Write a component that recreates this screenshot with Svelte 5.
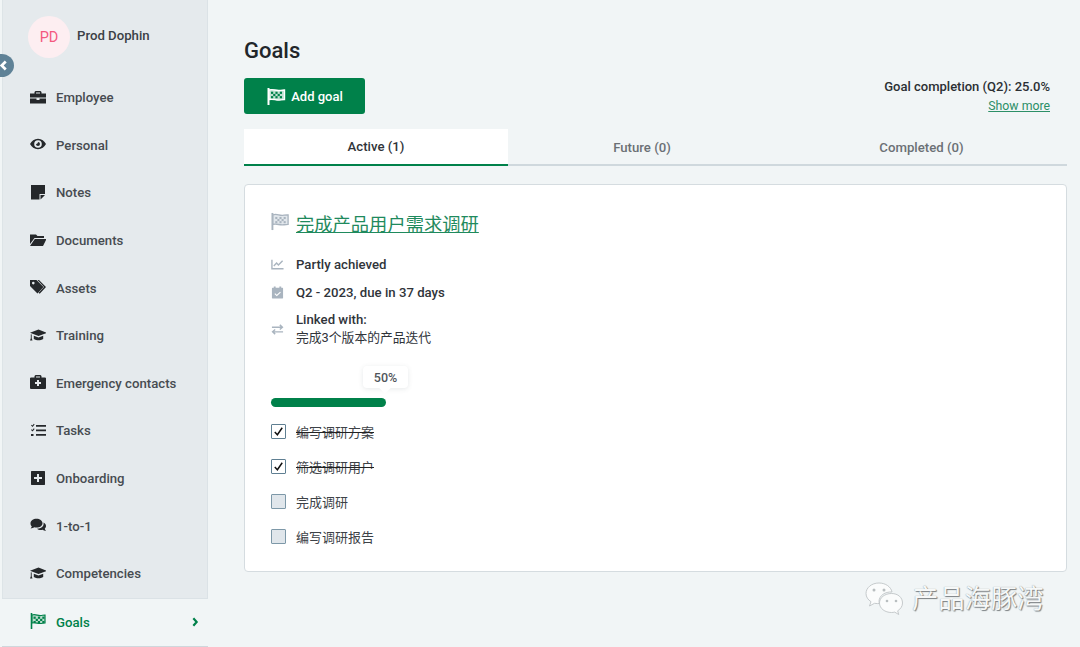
<script>
  const nav = [
    { label: "Employee", icon: "brief" },
    { label: "Personal", icon: "eye" },
    { label: "Notes", icon: "note" },
    { label: "Documents", icon: "folder" },
    { label: "Assets", icon: "tags" },
    { label: "Training", icon: "grad" },
    { label: "Emergency contacts", icon: "aid" },
    { label: "Tasks", icon: "tasks" },
    { label: "Onboarding", icon: "plus" },
    { label: "1-to-1", icon: "chat" },
    { label: "Competencies", icon: "grad" }
  ];
  const todos = [
    { text: "编写调研方案", done: true },
    { text: "筛选调研用户", done: true },
    { text: "完成调研", done: false },
    { text: "编写调研报告", done: false }
  ];
</script>

{#snippet checker(x, y, c)}
  <g fill={c}>
    {#each [0, 1, 2] as row}
      {#each [0, 1, 2, 3, 4] as col}
        {#if (row + col) % 2 === 0}
          <rect x={x + col * 2.2} y={y + row * 2.2} width="2.2" height="2.2" />
        {/if}
      {/each}
    {/each}
  </g>
{/snippet}

{#snippet navIcon(name)}
  <svg class="nav-icon" viewBox="0 0 16 16" aria-hidden="true">
    {#if name === "brief"}
      <path d="M5.500 2h5l1 1v1.500H16v4H0v-4h4.500V3zM6 3.500v1h4v-1zM0 9.500h6.500V11h3V9.500H16V14.500H0z" fill-rule="evenodd" />
    {:else if name === "eye"}
      <path fill-rule="evenodd" d="M8 2.800c3.600 0 6.500 2.300 8 5.200-1.500 2.900-4.400 5.200-8 5.200S1.500 10.900 0 8C1.500 5.100 4.400 2.800 8 2.800zm0 1.400A3.800 3.800 0 1 0 8 11.800 3.800 3.800 0 0 0 8 4.200zM8 6a2 2 0 1 1-2 2c.8.3 1.900-.9 2-2z" />
    {:else if name === "note"}
      <path d="M1 1h14v9h-5.500v5.500H1zM10.500 11H15l-4.500 4.500z" />
    {:else if name === "folder"}
      <path d="M0 2.500h6l1.500 1.500H14v2H4.500L0 12zM4.800 7H16.500l-3.500 7H0z" />
    {:else if name === "tags"}
      <path fill-rule="evenodd" d="M0 1h6.500l7 7-6 6.500L0 7zM3.300 2.800a1.300 1.300 0 1 0 0 2.600 1.300 1.300 0 0 0 0-2.600z" /><path d="M9 1l7 7-6.300 6.800-1.100-1L14 8 7.500 1z" />
    {:else if name === "grad"}
      <path d="M8.500 2.500L17 5.800 8.500 9 0 5.800zM3.800 8.800l4.700 1.800 4.700-1.800V12c-2.700 1.800-6.700 1.800-9.400 0zM.8 7.200v4l-.8 2.300h2.500l-.8-2.300V7.600z" />
    {:else if name === "aid"}
      <path fill-rule="evenodd" d="M5.500 1h5l1 1v1.500H15.300l.7.700V14.300l-.7.700H.7L0 14.300V4.200l.7-.7h3.800V2zM6 2.500v1h4v-1zM7 6V8H5v2h2v2h2v-2h2V8H9V6z" />
    {:else if name === "tasks"}
      <path d="M6 3h10v1.700H6zM6 7.500h10v1.700H6zM6 12h10v1.700H6zM1 12h2.500v2H1zM1 3.500l.8-.8.7.7 1.300-1.600.8.6-2 2.600zM1 8l.8-.8.7.7 1.300-1.600.8.6-2 2.600z" />
    {:else if name === "plus"}
      <path fill-rule="evenodd" d="M1.500 1H14.500l.5.500V14.500l-.5.500H1.500l-.5-.5V1.500zM7 4V7H4v2H7v3h2V9h3V7H9V4z" />
    {:else if name === "chat"}
      <path d="M6.500 1.800c3.300 0 6 1.900 6 4.400s-2.700 4.400-6 4.400c-.8 0-1.600-.1-2.300-.3C3.300 11 2 11.500.6 11.500c.7-.8 1.100-1.500 1.200-2.200C.8 8.600.5 7.400.5 6.200.5 3.700 3.200 1.800 6.500 1.800z" /><path d="M13.500 5.500c1.600.7 2.500 2.100 2.500 3.600 0 1-.5 2-1.200 2.700.1.800.5 1.400 1.200 2.100-1.300 0-2.500-.4-3.200-1.100-.7.200-1.400.3-2.100.3-1.500 0-2.800-.5-3.800-1.400 3.800.2 7.400-2.100 6.600-6.200z" />
    {/if}
  </svg>
{/snippet}

<div class="page">
  <aside class="sidebar">
    <div class="profile">
      <div class="avatar">PD</div>
      <div class="name">Prod Dophin</div>
    </div>
    <button class="collapse" aria-label="Collapse">
      <svg viewBox="0 0 10 12" width="9" height="11"><path d="M7.500 1.500L3 6l4.500 4.500" fill="none" stroke="#fff" stroke-width="3" /></svg>
    </button>
    <nav class="nav">
      {#each nav as item}
        <div class="nav-item">
          {@render navIcon(item.icon)}
          <span>{item.label}</span>
        </div>
      {/each}
      <div class="nav-item active">
        <svg class="nav-icon goal-icon" viewBox="0 0 16 16" aria-hidden="true">
          <path d="M1.500 0v16" stroke="#00814a" stroke-width="1.600" fill="none" />
          <path d="M2 2c4-1.200 5.500 1 9 .5 1.500-.2 3-.6 4-.5v8c-1.500 0-3 .4-4.500.5-3 .2-5-1.500-8.500-.5z" fill="#bcdccd" stroke="#00814a" stroke-width="1.200" />
          {@render checker(3.500, 3.600, "#00814a")}
        </svg>
        <span>Goals</span>
        <svg class="chev" viewBox="0 0 8 12" width="8" height="10"><path d="M2 1.500L6 6l-4 4.500" fill="none" stroke="#00814a" stroke-width="2.600" /></svg>
      </div>
    </nav>
  </aside>

  <main class="main">
    <h1>Goals</h1>
    <div class="toolbar">
      <button class="add">
        <svg viewBox="0 0 20 18" width="20" height="19" aria-hidden="true">
          <path d="M2.500 0.500v17" stroke="#fff" stroke-width="2" fill="none" />
          <path d="M3 2.500c4.500-1.500 6.500 1 10.500.5 1.500-.2 3-.6 5-.5v9.500c-2 0-3.500.4-5 .6-4 .4-6-1.800-10.500-.6z" fill="#bfe0d1" stroke="#fff" stroke-width="1.400" />
          {@render checker(5, 4.200, "#00814a")}
        </svg>
        <span>Add goal</span>
      </button>
      <div class="completion">
        <div class="completion-text">Goal completion (Q2): 25.0%</div>
        <a class="show-more" href="#more">Show more</a>
      </div>
    </div>

    <div class="tabs">
      <div class="tab current">Active (1)</div>
      <div class="tab">Future (0)</div>
      <div class="tab">Completed (0)</div>
    </div>

    <section class="card">
      <div class="goal-title">
        <svg viewBox="0 0 20 18" width="19" height="19" aria-hidden="true">
          <path d="M1.500 0v18" stroke="#a9b4bf" stroke-width="2" fill="none" />
          <path d="M2 2c4.500-1.500 6.500 1 10.500.5 1.500-.2 3-.6 5.500-.5v10c-2.500 0-4 .4-5.500.6-4 .4-6-1.800-10.500-.6z" fill="#e2e7ec" stroke="#a9b4bf" stroke-width="1.400" />
          {@render checker(4.500, 4.200, "#a9b4bf")}
        </svg>
        <a href="#goal">完成产品用户需求调研</a>
      </div>

      <div class="meta">
        <svg class="meta-icon" viewBox="0 0 14 14"><path d="M1 2V11.500H13.500M3 8.500L6 5.500l2 2L12.500 3" fill="none" stroke="#a9b4bf" stroke-width="1.500" /></svg>
        <span>Partly achieved</span>
      </div>
      <div class="meta">
        <svg class="meta-icon" viewBox="0 0 14 14"><path fill-rule="evenodd" d="M3 .5h2V2h4V.5h2V2h1.500l.5.500V13l-.5.500h-11L1 13V2.500L1.500 2H3zM9.800 6.200L6.200 9.500 4.500 7.800l-.8.800 2.500 2.500L10.600 7z" fill="#a9b4bf" /></svg>
        <span>Q2 - 2023, due in 37 days</span>
      </div>
      <div class="meta linked">
        <svg class="meta-icon" viewBox="0 0 14 14"><path d="M1 4.500h11M9.500 2L12.300 4.500 9.500 7M13 9.500H2M4.500 7L1.700 9.500 4.500 12" fill="none" stroke="#a9b4bf" stroke-width="1.500" /></svg>
        <div>
          <div>Linked with:</div>
          <div class="linked-name">完成3个版本的产品迭代</div>
        </div>
      </div>

      <div class="progress-wrap">
        <div class="bubble">50%</div>
        <div class="bar"></div>
      </div>

      <ul class="todos">
        {#each todos as t}
          <li>
            <span class="box" class:checked={t.done}>
              {#if t.done}
                <svg viewBox="0 0 14 14" width="13" height="13"><path d="M3 7.500L5.800 10.500 11 3" fill="none" stroke="#111" stroke-width="1.600" /></svg>
              {/if}
            </span>
            <span class:done={t.done}>{t.text}</span>
          </li>
        {/each}
      </ul>
    </section>

    <div class="watermark">
      <svg viewBox="0 0 42 36" width="42" height="36" aria-hidden="true">
        <path d="M15 2c6.500 0 12 3.800 13 9-6.800-.5-13 3.600-13 9.500 0 .7.100 1.400.3 2l-1.800.1c-1-.1-2-.2-3-.3l-5 2.700L7 20.700c-3-1.900-5-4.800-5-8.200C2 6.800 7.500 2 15 2z" fill="#fbfcfc" stroke="#b9bec0" stroke-width=".8" />
        <path d="M27.500 12.500C21 12.500 15.500 16.500 15.500 22S21 31.500 27.500 31.500c1.100 0 2.200-.2 3.200-.4l4 2.400-1-3.700c2.900-1.800 4.800-4.600 4.800-7.800 0-5.500-4.500-9.500-11-9.500z" fill="#fbfcfc" stroke="#b9bec0" stroke-width=".8" />
        <circle cx="10" cy="9" r="1.500" fill="#b9bec0" /><circle cx="20" cy="9" r="1.500" fill="#b9bec0" />
        <circle cx="23" cy="20" r="1.300" fill="#b9bec0" /><circle cx="32" cy="20" r="1.300" fill="#b9bec0" />
      </svg>
      <span>产品海豚湾</span>
    </div>
  </main>
</div>

<style>
  :global(body) {
    margin: 0;
    background: #f0f4f5;
  }
  .page {
    display: flex;
    width: 1080px;
    height: 647px;
    overflow: hidden;
    position: relative;
    background: #f1f5f6;
    color: #22262a;
    font-family: Roboto, "Noto Sans CJK SC", sans-serif;
    font-size: 14px;
  }
  .sidebar {
    width: 206px;
    margin-left: 2px;
    flex: none;
    height: 647px;
    box-sizing: border-box;
    padding-top: 16px;
    background: #e5eaed;
    border-right: 1px solid #dbe2e6;
    border-left: 1px solid #dde4e7;
    position: relative;
  }
  .profile {
    display: flex;
    align-items: flex-start;
    gap: 7px;
    padding-left: 25px;
    height: 58px;
  }
  .avatar {
    width: 42px;
    height: 42px;
    border-radius: 50%;
    background: #fdeef1;
    color: #f4587f;
    font-size: 14.500px;
    display: flex;
    align-items: center;
    justify-content: center;
  }
  .name {
    font-weight: 500;
    font-size: 13.200px;
    line-height: 16px;
    margin-top: 12px;
    color: #3b4045;
  }
  .collapse {
    position: absolute;
    left: -14px;
    top: 54px;
    width: 25px;
    height: 23px;
    border-radius: 50%;
    background: #5f8297;
    border: 0;
    padding: 0 0 0 3px;
    display: flex;
    align-items: center;
    justify-content: center;
  }
  .nav {
    display: flex;
    flex-direction: column;
  }
  .nav-item {
    height: 47.600px;
    display: flex;
    align-items: center;
    box-sizing: border-box;
    padding-left: 27px;
    font-weight: 500;
    font-size: 13.200px;
    color: #474c51;
  }
  .nav-icon {
    width: 16px;
    height: 16px;
    fill: #25282b;
    margin-right: 10px;
    flex: none;
    margin-top: -2px;
  }
  .nav-item.active {
    height: 49px;
    margin: 0 -1px;
    padding-left: 28px;
    padding-right: 9px;
    background: #f1f5f6;
    color: #00814a;
    border-top: 1px solid #dbe2e6;
    border-bottom: 1px solid #cfd7dc;
  }
  .nav-item.active span {
    flex: 1;
  }
  .goal-icon {
    fill: none;
  }
  .main {
    flex: 1;
    min-width: 0;
    box-sizing: border-box;
    padding: 38px 13px 0 36px;
    position: relative;
  }
  h1 {
    margin: 0;
    font-size: 22px;
    font-weight: 500;
    line-height: 26px;
    color: #22262a;
  }
  .toolbar {
    display: flex;
    justify-content: space-between;
    align-items: flex-start;
    height: 36px;
    margin-top: 14px;
  }
  .add {
    width: 121px;
    height: 36px;
    background: #00814a;
    border: 0;
    border-radius: 3px;
    color: #fff;
    font: 500 13px Roboto, sans-serif;
    display: flex;
    align-items: center;
    justify-content: center;
    gap: 5px;
    padding: 0;
  }
  .completion {
    text-align: right;
    margin-right: 17px;
    font-size: 13px;
    line-height: 18px;
  }
  .completion-text {
    font-weight: 500;
    color: #2b2f33;
  }
  .show-more {
    display: inline-block;
    margin-top: 1px;
    color: #2c8f67;
    text-decoration: underline;
    font-size: 12.300px;
  }
  .tabs {
    display: grid;
    grid-template-columns: 264px 268px 1fr;
    margin-top: 15px;
    height: 37px;
    border-bottom: 2px solid #cfd8dd;
    box-sizing: border-box;
  }
  .tab {
    height: 37px;
    box-sizing: border-box;
    display: flex;
    align-items: center;
    justify-content: center;
    font-weight: 500;
    font-size: 13.200px;
    color: #6b7075;
    padding-bottom: 1px;
  }
  .tab.current {
    background: #fff;
    color: #30343a;
    border-bottom: 2px solid #00814a;
  }
  .card {
    margin-top: 18px;
    height: 388px;
    box-sizing: border-box;
    background: #fff;
    border: 1px solid #d5dce0;
    border-radius: 4px;
    padding: 27px 26px 0 26px;
  }
  .goal-title {
    display: flex;
    align-items: flex-start;
    gap: 6px;
    height: 27px;
    font-size: 18.300px;
    line-height: 25px;
  }
  .goal-title svg {
    flex: none;
  }
  .goal-title a {
    color: #1f8a5d;
    text-decoration: underline;
  }
  .meta {
    display: flex;
    align-items: center;
    gap: 12px;
    height: 28px;
    font-weight: 500;
    font-size: 13.200px;
    color: #30343a;
  }
  .goal-title + .meta {
    margin-top: 11px;
  }
  .meta-icon {
    width: 13px;
    height: 13px;
    flex: none;
  }
  .meta.linked {
    height: 38px;
    margin-top: 4px;
    line-height: 18px;
  }
  .linked-name {
    font-weight: 400;
    font-size: 12.800px;
  }
  .progress-wrap {
    position: relative;
    margin-top: 50px;
    height: 10px;
  }
  .bar {
    width: 115px;
    height: 9px;
    border-radius: 5px;
    background: #00814a;
  }
  .bubble {
    position: absolute;
    left: 92px;
    top: -32px;
    width: 45px;
    height: 22px;
    border-radius: 4px;
    background: #fff;
    box-shadow: 0 1px 5px rgba(60, 70, 80, 0.12);
    display: flex;
    align-items: center;
    justify-content: center;
    font-weight: 500;
    font-size: 12.500px;
    color: #50555a;
  }
  .bubble::after {
    content: "";
    position: absolute;
    left: 18px;
    bottom: -4px;
    width: 8px;
    height: 8px;
    background: #fff;
    transform: rotate(45deg);
  }
  .todos {
    list-style: none;
    margin: 6px 0 0;
    padding: 0;
  }
  .todos li {
    height: 35px;
    display: flex;
    align-items: center;
    gap: 10px;
    font-size: 13px;
    color: #3d4247;
  }
  .box {
    width: 13px;
    height: 13px;
    border: 1px solid #7d98a8;
    background: #e0e6eb;
    display: flex;
    align-items: center;
    justify-content: center;
    border-radius: 1px;
    flex: none;
  }
  .box.checked {
    background: #fff;
    border-color: #5f7f92;
  }
  .done {
    text-decoration: line-through;
    text-decoration-color: #222;
  }
  .watermark {
    position: absolute;
    left: 656px;
    top: 581px;
    display: flex;
    align-items: center;
    gap: 6px;
    font-size: 26.300px;
    line-height: 36px;
    color: #f6f8f8;
    text-shadow: 1px 1px 1px #7b8083, 0 0 1px #8a8f92;
  }
</style>
